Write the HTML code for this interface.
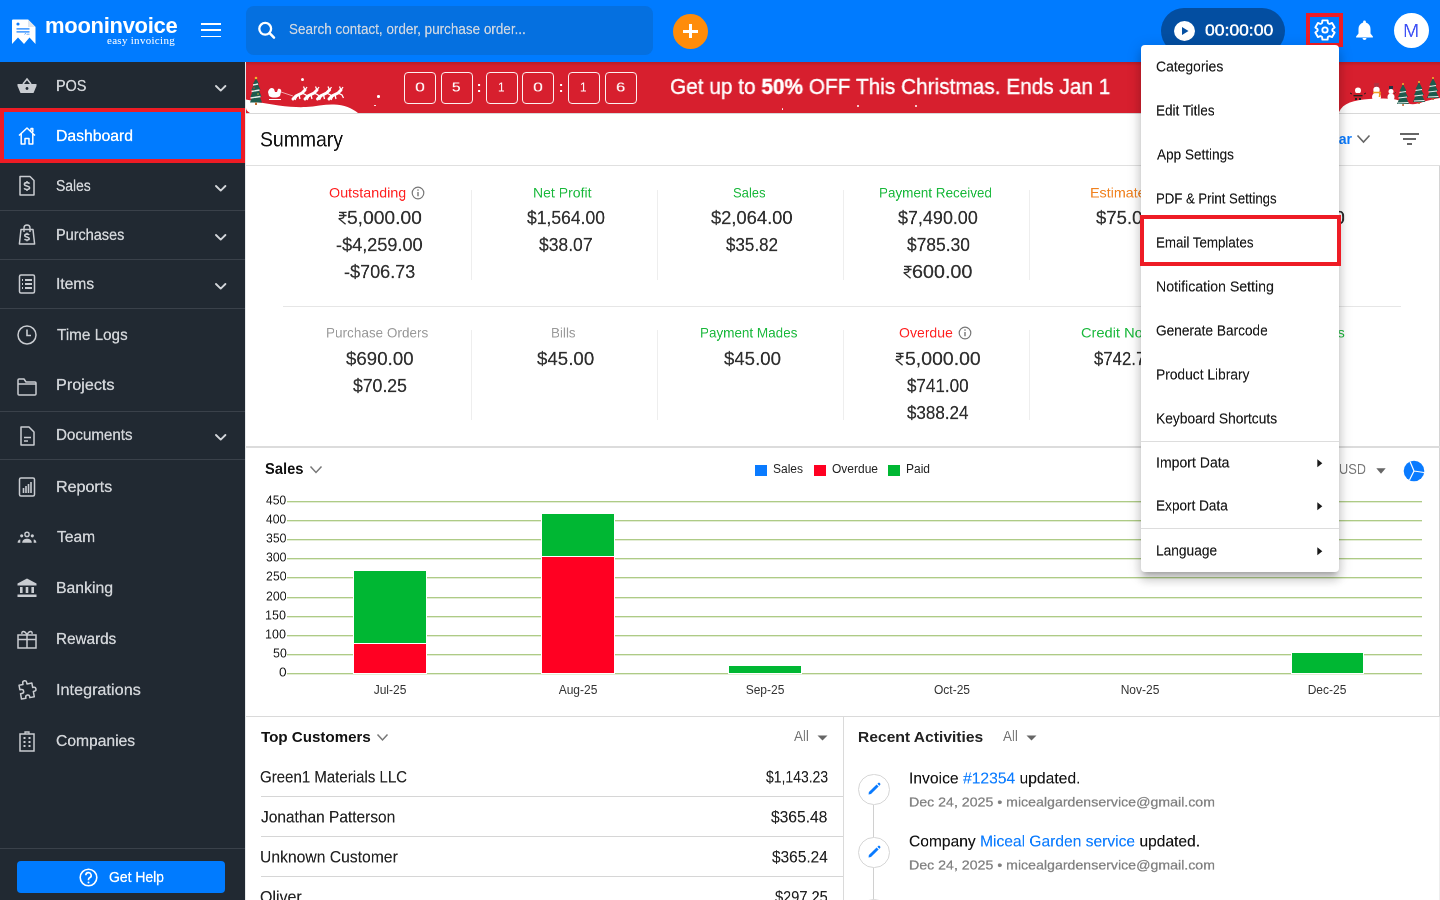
<!DOCTYPE html><html><head><meta charset="utf-8"><style>
*{margin:0;padding:0;box-sizing:border-box}
html,body{width:1440px;height:900px;overflow:hidden;background:#fff;font-family:"Liberation Sans",sans-serif}
.t{position:absolute;white-space:nowrap;line-height:1;will-change:transform}
.r{position:absolute}
</style></head><body>
<div class="r" style="left:0px;top:0px;width:1440px;height:62px;background:#007BFF"></div>
<svg class="r" style="left:11px;top:19px;" width="25" height="26" viewBox="0 0 25 26"><path d="M1 1.5 Q1 0.5 2 0.5 L17 0.5 L24.5 8 L24.5 25 L18.5 18.5 L13 25 L7 18.5 L1 25 Z" fill="#fff"/>
<path d="M17 0.5 L17 8 L24.5 8 Z" fill="#dfe6ee"/>
<circle cx="7" cy="5" r="1.6" fill="#0A7BFF"/>
<rect x="5.5" y="9.3" width="13" height="1.2" fill="#0A7BFF"/>
<rect x="5.5" y="12.3" width="13" height="1.2" fill="#0A7BFF"/>
<path d="M13.5 15.5 l1 -1.2 l0.8 1.2 M16 15.2 h2.5" stroke="#0A7BFF" stroke-width="0.6" fill="none"/></svg>
<div class="t" style="left:45px;top:14.80px;font-size:22px;color:#fff;font-weight:700;letter-spacing:-0.3px">mooninvoice</div>
<div class="t" style="left:-425.5px;width:600px;text-align:right;top:34.65px;font-size:11px;color:#fff;font-weight:400;font-family:'Liberation Serif',serif;letter-spacing:0.3px">easy invoicing</div>
<div class="r" style="left:201px;top:23px;width:20px;height:1.9px;background:#fff"></div>
<div class="r" style="left:201px;top:29.4px;width:20px;height:1.9px;background:#fff"></div>
<div class="r" style="left:201px;top:35.6px;width:20px;height:1.9px;background:#fff"></div>
<div class="r" style="left:246px;top:6px;width:407px;height:49px;background:#0570E0;border-radius:8px"></div>
<svg class="r" style="left:256px;top:19px;" width="22" height="22" viewBox="0 0 22 22"><circle cx="9.2" cy="9.8" r="5.9" stroke="#fff" stroke-width="2.3" fill="none"/><path d="M13.6 14.2 L18 18.6" stroke="#fff" stroke-width="2.5" stroke-linecap="round"/></svg>
<div class="t" style="left:289.33px;top:21.68px;font-size:28.99px;color:#CDD6E2;font-weight:400;transform:scale(0.4651,0.5);transform-origin:0 0;-webkit-text-stroke:0.4px currentColor;">Search contact, order, purchase order...</div>
<div class="r" style="left:673px;top:14px;width:35px;height:35px;background:#FF8C0A;border-radius:50%"></div>
<div class="r" style="left:683px;top:29.5px;width:15px;height:3px;background:#fff"></div>
<div class="r" style="left:689px;top:24px;width:3px;height:14px;background:#fff"></div>
<div class="r" style="left:1161px;top:8px;width:124px;height:46px;background:#034EA1;border-radius:23px"></div>
<div class="r" style="left:1174px;top:21px;width:21px;height:20px;background:#fff;border-radius:50%"></div>
<svg class="r" style="left:1174px;top:21px;" width="21" height="20" viewBox="0 0 21 20"><path d="M8 6 L14.5 10 L8 14 Z" fill="#034EA1"/></svg>
<div class="t" style="left:1205.30px;top:22.94px;font-size:30.73px;color:#fff;font-weight:400;transform:scale(0.5708,0.5);transform-origin:0 0;-webkit-text-stroke:0.9px currentColor;">00:00:00</div>
<div class="r" style="left:1306px;top:13px;width:37px;height:34px;border:4px solid #EE1C25"></div>
<svg class="r" style="left:1314px;top:19px;" width="22" height="22" viewBox="0 0 22 22"><path d="M7.35 4.68 L8.12 3.86 L8.41 1.34 L13.59 1.34 L13.88 3.86 L14.65 4.68 L15.74 4.93 L18.07 3.93 L20.66 8.41 L18.63 9.93 L18.30 11.00 L18.63 12.07 L20.66 13.59 L18.07 18.07 L15.74 17.07 L14.65 17.32 L13.88 18.14 L13.59 20.66 L8.41 20.66 L8.12 18.14 L7.35 17.32 L6.26 17.07 L3.93 18.07 L1.34 13.59 L3.37 12.07 L3.70 11.00 L3.37 9.93 L1.34 8.41 L3.93 3.93 L6.26 4.93Z" stroke="#fff" stroke-width="1.9" fill="none" stroke-linejoin="round"/><circle cx="11" cy="11" r="2.7" stroke="#fff" stroke-width="1.8" fill="none"/></svg>
<svg class="r" style="left:1355px;top:19px;" width="19" height="22" viewBox="0 0 19 22"><path d="M9.5 1.5 a1.4 1.4 0 0 1 1.4 1.4 v0.6 c3 0.8 4.6 3.4 4.6 6.5 v4.5 l2.4 3 v0.9 H1.1 v-0.9 l2.4 -3 v-4.5 c0 -3.1 1.6 -5.7 4.6 -6.5 v-0.6 a1.4 1.4 0 0 1 1.4 -1.4z" fill="#fff"/><path d="M7.5 19 h4 a2 2 0 0 1 -4 0z" fill="#fff"/></svg>
<div class="r" style="left:1394px;top:13px;width:35px;height:35px;background:#fff;border-radius:50%"></div>
<div class="t" style="left:1403.45px;top:21.60px;font-size:36.23px;color:#3F51F5;font-weight:400;transform:scale(0.5355,0.5);transform-origin:0 0;">M</div>
<div class="r" style="left:0px;top:62px;width:244.7px;height:838px;background:#212932"></div>
<div class="r" style="left:0px;top:108px;width:245px;height:1.2px;background:#3A414A"></div>
<div class="r" style="left:0px;top:209.5px;width:245px;height:1.2px;background:#3A414A"></div>
<div class="r" style="left:0px;top:258.5px;width:245px;height:1.2px;background:#3A414A"></div>
<div class="r" style="left:0px;top:307.5px;width:245px;height:1.2px;background:#3A414A"></div>
<div class="r" style="left:0px;top:410.5px;width:245px;height:1.2px;background:#3A414A"></div>
<div class="r" style="left:0px;top:459px;width:245px;height:1.2px;background:#3A414A"></div>
<div class="r" style="left:0px;top:108px;width:244.7px;height:55px;background:#EE1C25"></div>
<div class="r" style="left:4px;top:112px;width:237.2px;height:47px;background:#007BFF"></div>
<div class="t" style="left:55.85px;top:77.95px;font-size:31.88px;color:#D3D6DA;font-weight:400;transform:scale(0.4514,0.5);transform-origin:0 0;-webkit-text-stroke:0.6px currentColor;">POS</div>
<svg class="r" style="left:213px;top:83.8px;" width="15" height="9" viewBox="0 0 15 9"><path d="M3 2 L7.7 6.6 L12.4 2" stroke="#D3D6DA" stroke-width="1.9" fill="none" stroke-linecap="round" stroke-linejoin="round"/></svg>
<div class="t" style="left:55.74px;top:127.95px;font-size:31.88px;color:#fff;font-weight:400;transform:scale(0.4936,0.5);transform-origin:0 0;-webkit-text-stroke:0.6px currentColor;">Dashboard</div>
<div class="t" style="left:56.30px;top:177.95px;font-size:31.88px;color:#D3D6DA;font-weight:400;transform:scale(0.4360,0.5);transform-origin:0 0;-webkit-text-stroke:0.6px currentColor;">Sales</div>
<svg class="r" style="left:213px;top:183.8px;" width="15" height="9" viewBox="0 0 15 9"><path d="M3 2 L7.7 6.6 L12.4 2" stroke="#D3D6DA" stroke-width="1.9" fill="none" stroke-linecap="round" stroke-linejoin="round"/></svg>
<div class="t" style="left:55.84px;top:226.95px;font-size:31.88px;color:#D3D6DA;font-weight:400;transform:scale(0.4534,0.5);transform-origin:0 0;-webkit-text-stroke:0.6px currentColor;">Purchases</div>
<svg class="r" style="left:213px;top:232.8px;" width="15" height="9" viewBox="0 0 15 9"><path d="M3 2 L7.7 6.6 L12.4 2" stroke="#D3D6DA" stroke-width="1.9" fill="none" stroke-linecap="round" stroke-linejoin="round"/></svg>
<div class="t" style="left:55.60px;top:275.95px;font-size:31.88px;color:#D3D6DA;font-weight:400;transform:scale(0.4888,0.5);transform-origin:0 0;-webkit-text-stroke:0.6px currentColor;">Items</div>
<svg class="r" style="left:213px;top:281.8px;" width="15" height="9" viewBox="0 0 15 9"><path d="M3 2 L7.7 6.6 L12.4 2" stroke="#D3D6DA" stroke-width="1.9" fill="none" stroke-linecap="round" stroke-linejoin="round"/></svg>
<div class="t" style="left:56.69px;top:326.95px;font-size:31.88px;color:#D3D6DA;font-weight:400;transform:scale(0.4787,0.5);transform-origin:0 0;-webkit-text-stroke:0.6px currentColor;">Time Logs</div>
<div class="t" style="left:55.70px;top:377.45px;font-size:31.88px;color:#D3D6DA;font-weight:400;transform:scale(0.5077,0.5);transform-origin:0 0;-webkit-text-stroke:0.6px currentColor;">Projects</div>
<div class="t" style="left:55.79px;top:427.45px;font-size:31.88px;color:#D3D6DA;font-weight:400;transform:scale(0.4746,0.5);transform-origin:0 0;-webkit-text-stroke:0.6px currentColor;">Documents</div>
<svg class="r" style="left:213px;top:433.3px;" width="15" height="9" viewBox="0 0 15 9"><path d="M3 2 L7.7 6.6 L12.4 2" stroke="#D3D6DA" stroke-width="1.9" fill="none" stroke-linecap="round" stroke-linejoin="round"/></svg>
<div class="t" style="left:55.72px;top:478.95px;font-size:31.88px;color:#D3D6DA;font-weight:400;transform:scale(0.5034,0.5);transform-origin:0 0;-webkit-text-stroke:0.6px currentColor;">Reports</div>
<div class="t" style="left:56.69px;top:529.45px;font-size:31.88px;color:#D3D6DA;font-weight:400;transform:scale(0.4884,0.5);transform-origin:0 0;-webkit-text-stroke:0.6px currentColor;">Team</div>
<div class="t" style="left:55.74px;top:580.45px;font-size:31.88px;color:#D3D6DA;font-weight:400;transform:scale(0.4949,0.5);transform-origin:0 0;-webkit-text-stroke:0.6px currentColor;">Banking</div>
<div class="t" style="left:55.78px;top:631.45px;font-size:31.88px;color:#D3D6DA;font-weight:400;transform:scale(0.4791,0.5);transform-origin:0 0;-webkit-text-stroke:0.6px currentColor;">Rewards</div>
<div class="t" style="left:55.54px;top:682.45px;font-size:31.88px;color:#D3D6DA;font-weight:400;transform:scale(0.5089,0.5);transform-origin:0 0;-webkit-text-stroke:0.6px currentColor;">Integrations</div>
<div class="t" style="left:56.22px;top:733.20px;font-size:31.88px;color:#D3D6DA;font-weight:400;transform:scale(0.4906,0.5);transform-origin:0 0;-webkit-text-stroke:0.6px currentColor;">Companies</div>
<svg class="r" style="left:16px;top:76px;" width="22" height="22" viewBox="0 0 22 22"><path d="M7 8 L11 3 L15 8" stroke="#C9CCD1" stroke-width="1.6" fill="none"/><path d="M1.5 8 H20.5 V10 L17.5 17 H4.5 L1.5 10 Z" fill="#C9CCD1"/><circle cx="11" cy="12.5" r="1.4" fill="#212932"/></svg>
<svg class="r" style="left:16px;top:125px;" width="22" height="22" viewBox="0 0 22 22"><path d="M3 10.5 L11 3 L19 10.5 M5.2 8.5 V19 H9 V13.5 H13 V19 H16.8 V8.5 M15 5.5 V3.5 H16.8 V7.2" stroke="#fff" stroke-width="1.5" fill="none" stroke-linejoin="round"/></svg>
<svg class="r" style="left:16px;top:175px;" width="22" height="22" viewBox="0 0 22 22"><path d="M4 1.5 H14 L18 5.5 V20 H4 Z" stroke="#C9CCD1" stroke-width="1.5" fill="none" stroke-linejoin="round"/><path d="M13.40 8.70 C13.00 7.10 8.20 7.10 8.40 9.60 C8.60 11.20 13.60 10.80 13.60 12.80 C13.60 15.00 8.60 15.00 8.30 13.20 M11.00 6.00 V7.60 M11.00 14.60 V16.00" stroke="#C9CCD1" stroke-width="1.6" fill="none"/></svg>
<svg class="r" style="left:16px;top:224px;" width="22" height="22" viewBox="0 0 22 22"><path d="M5 5.5 H17 L18.6 20 H3.4 Z" stroke="#C9CCD1" stroke-width="1.5" fill="none" stroke-linejoin="round"/><path d="M8 8 V4 a3 3 0 0 1 6 0 V8" stroke="#C9CCD1" stroke-width="1.4" fill="none"/><path d="M13.04 11.04 C12.70 9.69 8.62 9.69 8.79 11.81 C8.96 13.17 13.21 12.83 13.21 14.53 C13.21 16.40 8.96 16.40 8.71 14.87 M11.00 8.75 V10.11 M11.00 16.06 V17.25" stroke="#C9CCD1" stroke-width="1.6" fill="none"/></svg>
<svg class="r" style="left:16px;top:273px;" width="22" height="22" viewBox="0 0 22 22"><rect x="3.5" y="2" width="15" height="18" rx="1.5" stroke="#C9CCD1" stroke-width="1.5" fill="none"/><path d="M9 7 H16 M9 11 H16 M9 15 H16" stroke="#C9CCD1" stroke-width="1.8"/><path d="M6 7 H7 M6 11 H7 M6 15 H7" stroke="#C9CCD1" stroke-width="1.8"/></svg>
<svg class="r" style="left:16px;top:324px;" width="22" height="22" viewBox="0 0 22 22"><circle cx="11" cy="11" r="9" stroke="#C9CCD1" stroke-width="1.5" fill="none"/><path d="M11 5.5 V11.5 H15" stroke="#C9CCD1" stroke-width="1.6" fill="none"/></svg>
<svg class="r" style="left:16px;top:375px;" width="22" height="22" viewBox="0 0 22 22"><path d="M2 5 V19 a1 1 0 0 0 1 1 H19 a1 1 0 0 0 1 -1 V8 a1 1 0 0 0 -1 -1 H10 L8 4 H3 a1 1 0 0 0 -1 1 Z M2 9 H20" stroke="#C9CCD1" stroke-width="1.5" fill="none" stroke-linejoin="round"/></svg>
<svg class="r" style="left:16px;top:425px;" width="22" height="22" viewBox="0 0 22 22"><path d="M5 2 H13 L18 7 V20 H5 Z" stroke="#C9CCD1" stroke-width="1.5" fill="none" stroke-linejoin="round"/><path d="M8 12.5 H15 M8 16 H12" stroke="#C9CCD1" stroke-width="1.6"/></svg>
<svg class="r" style="left:16px;top:476px;" width="22" height="22" viewBox="0 0 22 22"><rect x="3.5" y="2" width="15" height="18" rx="1.5" stroke="#C9CCD1" stroke-width="1.5" fill="none"/><path d="M7.5 17 V12 M10 17 V10 M12.5 17 V8 M15 17 V6" stroke="#C9CCD1" stroke-width="1.6"/></svg>
<svg class="r" style="left:16px;top:527px;" width="22" height="22" viewBox="0 0 22 22"><circle cx="11" cy="7.4" r="2.1" stroke="#C9CCD1" stroke-width="1.4" fill="none"/><circle cx="5.7" cy="8.8" r="1.6" fill="#C9CCD1"/><circle cx="16.3" cy="8.8" r="1.6" fill="#C9CCD1"/><path d="M6.2 15.8 C6.2 12.8 8.5 11.7 11 11.7 C13.5 11.7 15.8 12.8 15.8 15.8 Z" fill="#C9CCD1"/><path d="M1.6 15.8 C1.6 14 2.6 12.9 4.3 12.6 L4.3 15.8 Z M20.4 15.8 C20.4 14 19.4 12.9 17.7 12.6 L17.7 15.8 Z" fill="#C9CCD1"/></svg>
<svg class="r" style="left:16px;top:577px;" width="22" height="22" viewBox="0 0 22 22"><path d="M11 1.5 L20.5 6.5 V8.5 H1.5 V6.5 Z" fill="#C9CCD1"/><rect x="4" y="10" width="2.6" height="6" fill="#C9CCD1"/><rect x="9.7" y="10" width="2.6" height="6" fill="#C9CCD1"/><rect x="15.4" y="10" width="2.6" height="6" fill="#C9CCD1"/><rect x="1.5" y="17.5" width="19" height="2.5" fill="#C9CCD1"/></svg>
<svg class="r" style="left:16px;top:628px;" width="22" height="22" viewBox="0 0 22 22"><rect x="2" y="7" width="18" height="13" stroke="#C9CCD1" stroke-width="1.5" fill="none"/><path d="M2 11.5 H20 M11 7 V20" stroke="#C9CCD1" stroke-width="1.5"/><path d="M11 7 C9 2 5 3 6 6 M11 7 C13 2 17 3 16 6" stroke="#C9CCD1" stroke-width="1.4" fill="none"/></svg>
<svg class="r" style="left:16px;top:679px;" width="22" height="22" viewBox="0 0 22 22"><path d="M8 3.5 a2 2 0 0 1 4 0 V5 H17 V9.5 h1 a2 2 0 0 1 0 4 h-1 V19 H12.5 V18 a2 2 0 0 0 -4 0 V19 H4 V13.5 h1.5 a2 2 0 0 0 0 -4 H4 V5 H8 Z" stroke="#C9CCD1" stroke-width="1.5" fill="none" stroke-linejoin="round" transform="rotate(-10 11 11)"/></svg>
<svg class="r" style="left:16px;top:730px;" width="22" height="22" viewBox="0 0 22 22"><rect x="4" y="4" width="14" height="17" stroke="#C9CCD1" stroke-width="1.5" fill="none"/><path d="M9 4 V2 H13 V4" stroke="#C9CCD1" stroke-width="1.3" fill="none"/><path d="M7.5 8 h2 M12.5 8 h2 M7.5 12 h2 M12.5 12 h2 M7.5 16 h2 M12.5 16 h2" stroke="#C9CCD1" stroke-width="2.2"/></svg>
<div class="r" style="left:0px;top:847.5px;width:245px;height:1.2px;background:#3A414A"></div>
<div class="r" style="left:17px;top:861px;width:208px;height:32px;background:#007BFF;border-radius:4px"></div>
<svg class="r" style="left:79px;top:868px;" width="19" height="19" viewBox="0 0 19 19"><circle cx="9.5" cy="9.5" r="8.3" stroke="#fff" stroke-width="1.6" fill="none"/><path d="M6.8 7.3 a2.7 2.7 0 1 1 3.8 2.5 c-0.8 0.4 -1.1 0.9 -1.1 1.7 V12.3" stroke="#fff" stroke-width="1.6" fill="none"/><circle cx="9.5" cy="14.6" r="1" fill="#fff"/></svg>
<div class="t" style="left:109.30px;top:870.18px;font-size:28.99px;color:#fff;font-weight:400;transform:scale(0.4804,0.5);transform-origin:0 0;-webkit-text-stroke:0.6px currentColor;">Get Help</div>
<div class="r" style="left:244.7px;top:62px;width:1px;height:838px;background:#E6E8EA"></div>
<div class="r" style="left:245.5px;top:62px;width:1194.5px;height:51px;background:linear-gradient(#B91C27 0px,#D71F2E 4px,#D71F2E 100%)"></div>
<svg class="r" style="left:246px;top:62px;" width="115" height="51" viewBox="0 0 115 51"><path d="M0 37.5 C20 42 45 46 60 45 C70 44.5 80 42 88 42.5 C98 43 106 46 112 51 H4 C2 50 0 48 0 46 Z" fill="#fff"/></svg>
<svg class="r" style="left:248px;top:76px;" width="16" height="30" viewBox="0 0 16 30"><path d="M8 2 L11 8 L10 8 L12.5 14 L11 14 L13.5 21 L12 21 L14 26.5 H2 L4 21 H2.5 L5 14 H3.5 L6 8 H5 Z" fill="#1E5B4E"/><path d="M5 9 l5 -1 M3.5 15.5 l8 -1.5 M2.5 22 l10 -1.5" stroke="#E6EEEC" stroke-width="1.3"/><circle cx="6" cy="12" r="0.7" fill="#E33"/><circle cx="10" cy="18" r="0.7" fill="#FC3"/><rect x="7" y="26.5" width="2" height="2.5" fill="#C46B2B"/><circle cx="8" cy="2" r="1.3" fill="#F7B52B"/></svg>
<svg class="r" style="left:245px;top:86px;" width="120" height="16" viewBox="0 0 120 16"><path d="M23 6 C24 2 27 1 29 3 L30 6 L32 6 L33 3 C35 2 37 4 36 6 L35 10 C32 12 27 12 24 10 Z" fill="#fff"/><path d="M24 13.5 H36" stroke="#fff" stroke-width="1"/><path d="M36 6 L48 10" stroke="#fff" stroke-width="0.6"/><g transform="translate(47,0)"><path d="M1 13 L4 10 L10 7 L13 4" stroke="#fff" stroke-width="3" fill="none" stroke-linecap="round"/><path d="M13 4 L11.5 0.5 M13 4 L15 1 M10 7 L14 9 L15.5 12 M5 10 L3 14 M7 9 L8 13" stroke="#fff" stroke-width="1.3" fill="none"/></g><g transform="translate(59,0)"><path d="M1 13 L4 10 L10 7 L13 4" stroke="#fff" stroke-width="3" fill="none" stroke-linecap="round"/><path d="M13 4 L11.5 0.5 M13 4 L15 1 M10 7 L14 9 L15.5 12 M5 10 L3 14 M7 9 L8 13" stroke="#fff" stroke-width="1.3" fill="none"/></g><g transform="translate(71.5,0)"><path d="M1 13 L4 10 L10 7 L13 4" stroke="#fff" stroke-width="3" fill="none" stroke-linecap="round"/><path d="M13 4 L11.5 0.5 M13 4 L15 1 M10 7 L14 9 L15.5 12 M5 10 L3 14 M7 9 L8 13" stroke="#fff" stroke-width="1.3" fill="none"/></g><g transform="translate(83,0)"><path d="M1 13 L4 10 L10 7 L13 4" stroke="#fff" stroke-width="3" fill="none" stroke-linecap="round"/><path d="M13 4 L11.5 0.5 M13 4 L15 1 M10 7 L14 9 L15.5 12 M5 10 L3 14 M7 9 L8 13" stroke="#fff" stroke-width="1.3" fill="none"/></g></svg>
<div class="r" style="left:301px;top:78px;width:3px;height:3px;background:#fff;border-radius:50%"></div>
<div class="r" style="left:377px;top:95px;width:2.5px;height:2.5px;background:#fff;border-radius:50%"></div>
<div class="r" style="left:374px;top:104.5px;width:1.5px;height:1.5px;background:#fff;border-radius:50%"></div>
<div class="r" style="left:781.5px;top:108px;width:1.5px;height:1.5px;background:#fff;border-radius:50%"></div>
<div class="r" style="left:856.5px;top:104.5px;width:2px;height:2px;background:#fff;border-radius:50%"></div>
<div class="r" style="left:915px;top:104.5px;width:2px;height:2px;background:#fff;border-radius:50%"></div>
<div class="r" style="left:404px;top:72px;width:32px;height:32px;border:1.6px solid #FDEFF0;border-radius:4px"></div>
<div class="t" style="left:414.98px;top:80.92px;font-size:25.14px;color:#fff;font-weight:400;transform:scale(0.7127,0.5);transform-origin:0 0;-webkit-text-stroke:0.2px currentColor;">0</div>
<div class="r" style="left:440.5px;top:72px;width:32px;height:32px;border:1.6px solid #FDEFF0;border-radius:4px"></div>
<div class="t" style="left:452.18px;top:80.92px;font-size:25.14px;color:#fff;font-weight:400;transform:scale(0.6132,0.5);transform-origin:0 0;-webkit-text-stroke:0.2px currentColor;">5</div>
<div class="r" style="left:485.5px;top:72px;width:32px;height:32px;border:1.6px solid #FDEFF0;border-radius:4px"></div>
<div class="t" style="left:497.93px;top:80.92px;font-size:25.14px;color:#fff;font-weight:400;transform:scale(0.4810,0.5);transform-origin:0 0;-webkit-text-stroke:0.2px currentColor;">1</div>
<div class="r" style="left:522px;top:72px;width:32px;height:32px;border:1.6px solid #FDEFF0;border-radius:4px"></div>
<div class="t" style="left:532.98px;top:80.92px;font-size:25.14px;color:#fff;font-weight:400;transform:scale(0.7127,0.5);transform-origin:0 0;-webkit-text-stroke:0.2px currentColor;">0</div>
<div class="r" style="left:568px;top:72px;width:32px;height:32px;border:1.6px solid #FDEFF0;border-radius:4px"></div>
<div class="t" style="left:580.43px;top:80.92px;font-size:25.14px;color:#fff;font-weight:400;transform:scale(0.4810,0.5);transform-origin:0 0;-webkit-text-stroke:0.2px currentColor;">1</div>
<div class="r" style="left:605px;top:72px;width:32px;height:32px;border:1.6px solid #FDEFF0;border-radius:4px"></div>
<div class="t" style="left:616.37px;top:80.92px;font-size:25.14px;color:#fff;font-weight:400;transform:scale(0.6572,0.5);transform-origin:0 0;-webkit-text-stroke:0.2px currentColor;">6</div>
<div class="t" style="left:179px;width:600px;text-align:center;top:80.10px;font-size:14px;color:#fff;font-weight:700;">:</div>
<div class="t" style="left:261px;width:600px;text-align:center;top:80.10px;font-size:14px;color:#fff;font-weight:700;">:</div>
<div class="t" style="left:670px;top:76.38px;font-size:22.5px;color:#fff;font-weight:400;transform:scaleX(0.925);transform-origin:0 0;-webkit-text-stroke:0.35px #fff">Get up to <b>50%</b> OFF This Christmas. Ends Jan 1</div>
<svg class="r" style="left:1339px;top:62px;" width="101" height="51" viewBox="0 0 101 51"><path d="M0 50 C4 41 15 38 30 37 C45 36 55 36 62 39 C70 43 76 43 84 40 C90 38 95 37 101 36 V51 H0 Z" fill="#fff"/><g transform="translate(13,22)"><path d="M3 5 L6 0 L9 5 Z" fill="#D7202F"/><circle cx="6" cy="6.5" r="3" fill="#fff"/><path d="M1.5 9 H10.5 V14 H1.5 Z" fill="#C81E2A"/><rect x="1.5" y="11" width="9" height="1.3" fill="#222"/><path d="M0 10 L-2 9 M12 10 L14 9" stroke="#222" stroke-width="1"/><rect x="3" y="14" width="2" height="2" fill="#222"/><rect x="7" y="14" width="2" height="2" fill="#222"/></g><g transform="translate(32,21)"><rect x="3" y="0" width="5" height="4" fill="#B03040"/><circle cx="5.5" cy="7" r="3.2" fill="#fff"/><circle cx="5.5" cy="14" r="4.5" fill="#fff"/><path d="M2 9.5 H9 L8.5 14" stroke="#F0A020" stroke-width="1.6" fill="none"/></g><g transform="translate(48,24)"><rect x="2" y="0" width="4" height="3" fill="#234"/><circle cx="4" cy="5.5" r="2.5" fill="#fff"/><circle cx="4" cy="11" r="3.5" fill="#fff"/><path d="M7 8 L9 6" stroke="#5a3a2a" stroke-width="0.8"/></g><g transform="translate(59,22)"><path d="M5 0 L8.5 7 H7 L10 13 H8 L11 20 H-1 L2 13 H0 L3 7 H1.5 Z" fill="#1D5C4D"/><path d="M1.5 8.5 L8 7.5 M0.5 14 L9 13 M0 19 L10.5 18.5" stroke="#E8F0EE" stroke-width="1.1"/><rect x="4.3" y="20" width="1.5" height="2" fill="#B8612A"/><circle cx="5" cy="0" r="1" fill="#F5B82E"/></g><g transform="translate(75,20)"><path d="M5 0 L8.5 7 H7 L10 13 H8 L11 20 H-1 L2 13 H0 L3 7 H1.5 Z" fill="#1D5C4D"/><path d="M1.5 8.5 L8 7.5 M0.5 14 L9 13 M0 19 L10.5 18.5" stroke="#E8F0EE" stroke-width="1.1"/><rect x="4.3" y="20" width="1.5" height="2" fill="#B8612A"/><circle cx="5" cy="0" r="1" fill="#F5B82E"/></g><g transform="translate(89,16)"><path d="M5 0 L8.5 7 H7 L10 13 H8 L11 20 H-1 L2 13 H0 L3 7 H1.5 Z" fill="#1D5C4D"/><path d="M1.5 8.5 L8 7.5 M0.5 14 L9 13 M0 19 L10.5 18.5" stroke="#E8F0EE" stroke-width="1.1"/><rect x="4.3" y="20" width="1.5" height="2" fill="#B8612A"/><circle cx="5" cy="0" r="1" fill="#F5B82E"/></g></svg>
<div class="r" style="left:245.5px;top:113px;width:1194px;height:1.2px;background:#D8D8D8"></div>
<div class="t" style="left:259.63px;top:128.84px;font-size:42.03px;color:#111;font-weight:400;transform:scale(0.4612,0.5);transform-origin:0 0;">Summary</div>
<div class="r" style="left:245.5px;top:165px;width:1194px;height:1.2px;background:#E0E0E0"></div>
<div class="t" style="left:751.5px;width:600px;text-align:right;top:131.90px;font-size:14px;color:#0A7BFF;font-weight:700;">ar</div>
<svg class="r" style="left:1356px;top:134px;" width="15" height="10" viewBox="0 0 15 10"><path d="M1.5 1.5 L7.5 8 L13.5 1.5" stroke="#666" stroke-width="1.6" fill="none"/></svg>
<div class="r" style="left:1400px;top:133px;width:18.5px;height:1.8px;background:#666"></div>
<div class="r" style="left:1403px;top:138.2px;width:12.5px;height:1.8px;background:#666"></div>
<div class="r" style="left:1407px;top:143px;width:4.5px;height:1.8px;background:#666"></div>
<div class="r" style="left:1438.5px;top:166px;width:1.5px;height:550px;background:#D4D4D4"></div>
<div class="r" style="left:1438.5px;top:716px;width:1.5px;height:184px;background:#EEEEEE"></div>
<div class="t" style="left:328.68px;top:185.57px;font-size:27.83px;color:#FF1E1E;font-weight:400;transform:scale(0.5152,0.5);transform-origin:0 0;">Outstanding</div>
<svg class="r" style="left:337.5px;top:211.2px;" width="10" height="14" viewBox="0 0 10 14"><path d="M1 1.35 H8.6 M1 4.5 H8.6 M1.9 1.35 C7.3 1.35 7.3 7.7 1.9 7.7 H1 L7.6 13.2" stroke="#2e2e2e" stroke-width="1.35" fill="none" stroke-linejoin="round"/></svg>
<div class="t" style="left:346.73px;top:208.98px;font-size:36.52px;color:#2e2e2e;font-weight:400;transform:scale(0.5268,0.5);transform-origin:0 0;-webkit-text-stroke:0.4px currentColor;">5,000.00</div>
<div class="t" style="left:336.13px;top:235.98px;font-size:36.52px;color:#2e2e2e;font-weight:400;transform:scale(0.4959,0.5);transform-origin:0 0;-webkit-text-stroke:0.4px currentColor;">-$4,259.00</div>
<div class="t" style="left:343.93px;top:262.98px;font-size:36.52px;color:#2e2e2e;font-weight:400;transform:scale(0.4944,0.5);transform-origin:0 0;-webkit-text-stroke:0.4px currentColor;">-$706.73</div>
<div class="t" style="left:533.33px;top:185.57px;font-size:27.83px;color:#19B83B;font-weight:400;transform:scale(0.5047,0.5);transform-origin:0 0;">Net Profit</div>
<div class="t" style="left:526.87px;top:208.98px;font-size:36.52px;color:#2e2e2e;font-weight:400;transform:scale(0.4798,0.5);transform-origin:0 0;-webkit-text-stroke:0.4px currentColor;">$1,564.00</div>
<div class="t" style="left:539.18px;top:235.98px;font-size:36.52px;color:#2e2e2e;font-weight:400;transform:scale(0.4792,0.5);transform-origin:0 0;-webkit-text-stroke:0.4px currentColor;">$38.07</div>
<div class="t" style="left:732.90px;top:185.57px;font-size:27.83px;color:#19B83B;font-weight:400;transform:scale(0.4667,0.5);transform-origin:0 0;">Sales</div>
<div class="t" style="left:711.22px;top:208.98px;font-size:36.52px;color:#2e2e2e;font-weight:400;transform:scale(0.5016,0.5);transform-origin:0 0;-webkit-text-stroke:0.4px currentColor;">$2,064.00</div>
<div class="t" style="left:726.03px;top:235.98px;font-size:36.52px;color:#2e2e2e;font-weight:400;transform:scale(0.4655,0.5);transform-origin:0 0;-webkit-text-stroke:0.4px currentColor;">$35.82</div>
<div class="t" style="left:878.72px;top:185.57px;font-size:27.83px;color:#19B83B;font-weight:400;transform:scale(0.4835,0.5);transform-origin:0 0;">Payment Received</div>
<div class="t" style="left:898.17px;top:208.98px;font-size:36.52px;color:#2e2e2e;font-weight:400;transform:scale(0.4910,0.5);transform-origin:0 0;-webkit-text-stroke:0.4px currentColor;">$7,490.00</div>
<div class="t" style="left:906.58px;top:235.98px;font-size:36.52px;color:#2e2e2e;font-weight:400;transform:scale(0.4763,0.5);transform-origin:0 0;-webkit-text-stroke:0.4px currentColor;">$785.30</div>
<svg class="r" style="left:903.25px;top:265.2px;" width="10" height="14" viewBox="0 0 10 14"><path d="M1 1.35 H8.6 M1 4.5 H8.6 M1.9 1.35 C7.3 1.35 7.3 7.7 1.9 7.7 H1 L7.6 13.2" stroke="#2e2e2e" stroke-width="1.35" fill="none" stroke-linejoin="round"/></svg>
<div class="t" style="left:912.26px;top:262.98px;font-size:36.52px;color:#2e2e2e;font-weight:400;transform:scale(0.5402,0.5);transform-origin:0 0;-webkit-text-stroke:0.4px currentColor;">600.00</div>
<div class="t" style="left:1089.76px;top:185.57px;font-size:27.83px;color:#F0811E;font-weight:400;transform:scale(0.5134,0.5);transform-origin:0 0;">Estimates</div>
<div class="t" style="left:1095.81px;top:208.98px;font-size:36.52px;color:#2e2e2e;font-weight:400;transform:scale(0.5076,0.5);transform-origin:0 0;-webkit-text-stroke:0.4px currentColor;">$75.00</div>
<div class="t" style="left:1280.18px;top:185.57px;font-size:27.83px;color:#19B83B;font-weight:400;transform:scale(0.5279,0.5);transform-origin:0 0;">Invoices</div>
<div class="t" style="left:1275.81px;top:208.98px;font-size:36.52px;color:#2e2e2e;font-weight:400;transform:scale(0.5215,0.5);transform-origin:0 0;-webkit-text-stroke:0.4px currentColor;">$700.00</div>
<div class="r" style="left:470.5px;top:189.7px;width:1px;height:90px;background:#EEEEEE"></div>
<div class="r" style="left:656.5px;top:189.7px;width:1px;height:90px;background:#EEEEEE"></div>
<div class="r" style="left:842.5px;top:189.7px;width:1px;height:90px;background:#EEEEEE"></div>
<div class="r" style="left:1028.5px;top:189.7px;width:1px;height:90px;background:#EEEEEE"></div>
<div class="r" style="left:1214.5px;top:189.7px;width:1px;height:90px;background:#EEEEEE"></div>
<div class="t" style="left:325.62px;top:325.57px;font-size:27.83px;color:#999;font-weight:400;transform:scale(0.4859,0.5);transform-origin:0 0;">Purchase Orders</div>
<div class="t" style="left:345.96px;top:349.68px;font-size:36.52px;color:#2e2e2e;font-weight:400;transform:scale(0.5116,0.5);transform-origin:0 0;-webkit-text-stroke:0.4px currentColor;">$690.00</div>
<div class="t" style="left:352.82px;top:376.68px;font-size:36.52px;color:#2e2e2e;font-weight:400;transform:scale(0.4821,0.5);transform-origin:0 0;-webkit-text-stroke:0.4px currentColor;">$70.25</div>
<div class="t" style="left:550.58px;top:325.57px;font-size:27.83px;color:#999;font-weight:400;transform:scale(0.4813,0.5);transform-origin:0 0;">Bills</div>
<div class="t" style="left:537.29px;top:349.68px;font-size:36.52px;color:#2e2e2e;font-weight:400;transform:scale(0.5117,0.5);transform-origin:0 0;-webkit-text-stroke:0.4px currentColor;">$45.00</div>
<div class="t" style="left:700.22px;top:325.57px;font-size:27.83px;color:#19B83B;font-weight:400;transform:scale(0.4842,0.5);transform-origin:0 0;">Payment Mades</div>
<div class="t" style="left:723.51px;top:349.68px;font-size:36.52px;color:#2e2e2e;font-weight:400;transform:scale(0.5094,0.5);transform-origin:0 0;-webkit-text-stroke:0.4px currentColor;">$45.00</div>
<div class="t" style="left:898.60px;top:325.57px;font-size:27.83px;color:#FF1E1E;font-weight:400;transform:scale(0.5045,0.5);transform-origin:0 0;">Overdue</div>
<svg class="r" style="left:895.4px;top:351.9px;" width="10" height="14" viewBox="0 0 10 14"><path d="M1 1.35 H8.6 M1 4.5 H8.6 M1.9 1.35 C7.3 1.35 7.3 7.7 1.9 7.7 H1 L7.6 13.2" stroke="#2e2e2e" stroke-width="1.35" fill="none" stroke-linejoin="round"/></svg>
<div class="t" style="left:904.62px;top:349.68px;font-size:36.52px;color:#2e2e2e;font-weight:400;transform:scale(0.5326,0.5);transform-origin:0 0;-webkit-text-stroke:0.4px currentColor;">5,000.00</div>
<div class="t" style="left:907.23px;top:376.68px;font-size:36.52px;color:#2e2e2e;font-weight:400;transform:scale(0.4663,0.5);transform-origin:0 0;-webkit-text-stroke:0.4px currentColor;">$741.00</div>
<div class="t" style="left:907.23px;top:403.68px;font-size:36.52px;color:#2e2e2e;font-weight:400;transform:scale(0.4650,0.5);transform-origin:0 0;-webkit-text-stroke:0.4px currentColor;">$388.24</div>
<div class="t" style="left:1080.67px;top:325.57px;font-size:27.83px;color:#19B83B;font-weight:400;transform:scale(0.5256,0.5);transform-origin:0 0;">Credit Notes</div>
<div class="t" style="left:1093.83px;top:349.68px;font-size:36.52px;color:#2e2e2e;font-weight:400;transform:scale(0.4587,0.5);transform-origin:0 0;-webkit-text-stroke:0.4px currentColor;">$742.75</div>
<div class="t" style="left:1269.85px;top:325.57px;font-size:27.83px;color:#19B83B;font-weight:400;transform:scale(0.5144,0.5);transform-origin:0 0;">Debit Notes</div>
<div class="t" style="left:1289.84px;top:349.68px;font-size:36.52px;color:#2e2e2e;font-weight:400;transform:scale(0.4452,0.5);transform-origin:0 0;-webkit-text-stroke:0.4px currentColor;">$0.00</div>
<div class="r" style="left:470.5px;top:329.7px;width:1px;height:90px;background:#EEEEEE"></div>
<div class="r" style="left:656.5px;top:329.7px;width:1px;height:90px;background:#EEEEEE"></div>
<div class="r" style="left:842.5px;top:329.7px;width:1px;height:90px;background:#EEEEEE"></div>
<div class="r" style="left:1028.5px;top:329.7px;width:1px;height:90px;background:#EEEEEE"></div>
<div class="r" style="left:1214.5px;top:329.7px;width:1px;height:90px;background:#EEEEEE"></div>
<svg class="r" style="left:410.5px;top:186px;" width="14" height="14" viewBox="0 0 14 14"><circle cx="7" cy="7" r="5.8" stroke="#777" stroke-width="1.2" fill="none"/><path d="M7 6 V10.3" stroke="#777" stroke-width="1.4"/><circle cx="7" cy="4.1" r="0.8" fill="#777"/></svg>
<svg class="r" style="left:957.5px;top:326px;" width="14" height="14" viewBox="0 0 14 14"><circle cx="7" cy="7" r="5.8" stroke="#777" stroke-width="1.2" fill="none"/><path d="M7 6 V10.3" stroke="#777" stroke-width="1.4"/><circle cx="7" cy="4.1" r="0.8" fill="#777"/></svg>
<div class="r" style="left:283px;top:305.5px;width:1118px;height:1.2px;background:#E6E6E6"></div>
<div class="r" style="left:245.5px;top:446.2px;width:1194px;height:1.5px;background:#DCDCDC"></div>
<div class="t" style="left:265.36px;top:460.57px;font-size:30.43px;color:#111;font-weight:700;transform:scale(0.4832,0.5);transform-origin:0 0;">Sales</div>
<svg class="r" style="left:309px;top:465px;" width="14" height="10" viewBox="0 0 14 10"><path d="M1.5 1.5 L7 7.5 L12.5 1.5" stroke="#777" stroke-width="1.5" fill="none"/></svg>
<div class="r" style="left:755px;top:465px;width:12px;height:11px;background:#0A7BFF"></div>
<div class="t" style="left:772.7px;top:463.30px;font-size:12px;color:#222;font-weight:400;">Sales</div>
<div class="r" style="left:814px;top:465px;width:12px;height:11px;background:#FF0022"></div>
<div class="t" style="left:831.7px;top:463.30px;font-size:12px;color:#222;font-weight:400;">Overdue</div>
<div class="r" style="left:888px;top:465px;width:12px;height:11px;background:#00B733"></div>
<div class="t" style="left:905.7px;top:463.30px;font-size:12px;color:#222;font-weight:400;">Paid</div>
<div class="t" style="left:1339.47px;top:462.30px;font-size:28.70px;color:#777;font-weight:400;transform:scale(0.4466,0.5);transform-origin:0 0;">USD</div>
<svg class="r" style="left:1375.5px;top:467.8px;" width="10" height="6" viewBox="0 0 10 6"><path d="M0.3 0.3 H9.7 L5 5.7 Z" fill="#666"/></svg>
<svg class="r" style="left:1403px;top:460px;" width="22" height="22" viewBox="0 0 22 22"><circle cx="11" cy="11" r="10.3" fill="#0A7BFF"/><path d="M11 11 L7 1.5 M11 11 L21 12.5 M11 11 L6.5 20" stroke="#fff" stroke-width="1.2"/></svg>
<div class="r" style="left:287px;top:673px;width:1135px;height:1px;background:#AECB86;box-shadow:0 1px 0 rgba(174,203,134,0.35)"></div>
<div class="t" style="left:278.96px;top:665.68px;font-size:25.70px;color:#1a1a1a;font-weight:400;transform:scale(0.5269,0.5);transform-origin:0 0;">0</div>
<div class="r" style="left:287px;top:654px;width:1135px;height:1px;background:#AECB86;box-shadow:0 1px 0 rgba(174,203,134,0.35)"></div>
<div class="t" style="left:272.50px;top:646.68px;font-size:25.70px;color:#1a1a1a;font-weight:400;transform:scale(0.4864,0.5);transform-origin:0 0;">50</div>
<div class="r" style="left:287px;top:635px;width:1135px;height:1px;background:#AECB86;box-shadow:0 1px 0 rgba(174,203,134,0.35)"></div>
<div class="t" style="left:265.49px;top:627.68px;font-size:25.70px;color:#1a1a1a;font-weight:400;transform:scale(0.4896,0.5);transform-origin:0 0;">100</div>
<div class="r" style="left:287px;top:616px;width:1135px;height:1px;background:#AECB86;box-shadow:0 1px 0 rgba(174,203,134,0.35)"></div>
<div class="t" style="left:265.49px;top:608.68px;font-size:25.70px;color:#1a1a1a;font-weight:400;transform:scale(0.4896,0.5);transform-origin:0 0;">150</div>
<div class="r" style="left:287px;top:597px;width:1135px;height:1px;background:#AECB86;box-shadow:0 1px 0 rgba(174,203,134,0.35)"></div>
<div class="t" style="left:265.88px;top:589.68px;font-size:25.70px;color:#1a1a1a;font-weight:400;transform:scale(0.4803,0.5);transform-origin:0 0;">200</div>
<div class="r" style="left:287px;top:577px;width:1135px;height:1px;background:#AECB86;box-shadow:0 1px 0 rgba(174,203,134,0.35)"></div>
<div class="t" style="left:265.88px;top:569.68px;font-size:25.70px;color:#1a1a1a;font-weight:400;transform:scale(0.4803,0.5);transform-origin:0 0;">250</div>
<div class="r" style="left:287px;top:558px;width:1135px;height:1px;background:#AECB86;box-shadow:0 1px 0 rgba(174,203,134,0.35)"></div>
<div class="t" style="left:266.01px;top:550.68px;font-size:25.70px;color:#1a1a1a;font-weight:400;transform:scale(0.4772,0.5);transform-origin:0 0;">300</div>
<div class="r" style="left:287px;top:539px;width:1135px;height:1px;background:#AECB86;box-shadow:0 1px 0 rgba(174,203,134,0.35)"></div>
<div class="t" style="left:266.01px;top:531.68px;font-size:25.70px;color:#1a1a1a;font-weight:400;transform:scale(0.4772,0.5);transform-origin:0 0;">350</div>
<div class="r" style="left:287px;top:520px;width:1135px;height:1px;background:#AECB86;box-shadow:0 1px 0 rgba(174,203,134,0.35)"></div>
<div class="t" style="left:266.26px;top:512.68px;font-size:25.70px;color:#1a1a1a;font-weight:400;transform:scale(0.4713,0.5);transform-origin:0 0;">400</div>
<div class="r" style="left:287px;top:501px;width:1135px;height:1px;background:#AECB86;box-shadow:0 1px 0 rgba(174,203,134,0.35)"></div>
<div class="t" style="left:266.26px;top:493.68px;font-size:25.70px;color:#1a1a1a;font-weight:400;transform:scale(0.4713,0.5);transform-origin:0 0;">450</div>
<div class="r" style="left:353px;top:570px;width:73.5px;height:73.5px;background:#00B733;border:1px solid #fff"></div>
<div class="r" style="left:353px;top:643px;width:73.5px;height:30.5px;background:#FF0022;border:1px solid #fff"></div>
<div class="r" style="left:541px;top:512.5px;width:73.5px;height:44.0px;background:#00B733;border:1px solid #fff"></div>
<div class="r" style="left:541px;top:556px;width:73.5px;height:117.5px;background:#FF0022;border:1px solid #fff"></div>
<div class="r" style="left:728px;top:664.5px;width:73.5px;height:9.0px;background:#00B733;border:1px solid #fff"></div>
<div class="r" style="left:1290.5px;top:651.5px;width:73.5px;height:22.0px;background:#00B733;border:1px solid #fff"></div>
<div class="t" style="left:90px;width:600px;text-align:center;top:683.80px;font-size:12px;color:#333;font-weight:400;">Jul-25</div>
<div class="t" style="left:277.5px;width:600px;text-align:center;top:683.80px;font-size:12px;color:#333;font-weight:400;">Aug-25</div>
<div class="t" style="left:465px;width:600px;text-align:center;top:683.80px;font-size:12px;color:#333;font-weight:400;">Sep-25</div>
<div class="t" style="left:652px;width:600px;text-align:center;top:683.80px;font-size:12px;color:#333;font-weight:400;">Oct-25</div>
<div class="t" style="left:839.5px;width:600px;text-align:center;top:683.80px;font-size:12px;color:#333;font-weight:400;">Nov-25</div>
<div class="t" style="left:1027px;width:600px;text-align:center;top:683.80px;font-size:12px;color:#333;font-weight:400;">Dec-25</div>
<div class="r" style="left:245.5px;top:716px;width:1194px;height:1.2px;background:#DADADA"></div>
<div class="r" style="left:842.5px;top:716px;width:1.2px;height:184px;background:#DADADA"></div>
<div class="t" style="left:260.85px;top:729.98px;font-size:28.99px;color:#111;font-weight:700;transform:scale(0.5216,0.5);transform-origin:0 0;">Top Customers</div>
<svg class="r" style="left:376px;top:733px;" width="13" height="9" viewBox="0 0 13 9"><path d="M1.5 1.5 L6.5 7 L11.5 1.5" stroke="#777" stroke-width="1.5" fill="none"/></svg>
<div class="t" style="left:794.00px;top:729.18px;font-size:28.99px;color:#777;font-weight:400;transform:scale(0.4600,0.5);transform-origin:0 0;">All</div>
<svg class="r" style="left:817px;top:735px;" width="11" height="6" viewBox="0 0 11 6"><path d="M0.5 0.5 H10.5 L5.5 5.5 Z" fill="#666"/></svg>
<div class="t" style="left:260.25px;top:768.80px;font-size:32.46px;color:#222;font-weight:400;transform:scale(0.4632,0.5);transform-origin:0 0;-webkit-text-stroke:0.24px currentColor;">Green1 Materials LLC</div>
<div class="t" style="left:765.56px;top:768.80px;font-size:32.46px;color:#222;font-weight:400;transform:scale(0.4301,0.5);transform-origin:0 0;-webkit-text-stroke:0.24px currentColor;">$1,143.23</div>
<div class="r" style="left:261px;top:796px;width:582px;height:1px;background:#D6D6D6"></div>
<div class="t" style="left:260.69px;top:808.80px;font-size:32.46px;color:#222;font-weight:400;transform:scale(0.4769,0.5);transform-origin:0 0;-webkit-text-stroke:0.24px currentColor;">Jonathan Patterson</div>
<div class="t" style="left:771.34px;top:808.80px;font-size:32.46px;color:#222;font-weight:400;transform:scale(0.4802,0.5);transform-origin:0 0;-webkit-text-stroke:0.24px currentColor;">$365.48</div>
<div class="r" style="left:261px;top:836px;width:582px;height:1px;background:#D6D6D6"></div>
<div class="t" style="left:259.74px;top:848.80px;font-size:32.46px;color:#222;font-weight:400;transform:scale(0.4835,0.5);transform-origin:0 0;-webkit-text-stroke:0.24px currentColor;">Unknown Customer</div>
<div class="t" style="left:771.65px;top:848.80px;font-size:32.46px;color:#222;font-weight:400;transform:scale(0.4750,0.5);transform-origin:0 0;-webkit-text-stroke:0.24px currentColor;">$365.24</div>
<div class="r" style="left:261px;top:876px;width:582px;height:1px;background:#D6D6D6"></div>
<div class="t" style="left:260.20px;top:888.80px;font-size:32.46px;color:#222;font-weight:400;transform:scale(0.4916,0.5);transform-origin:0 0;-webkit-text-stroke:0.24px currentColor;">Oliver</div>
<div class="t" style="left:774.75px;top:888.80px;font-size:32.46px;color:#222;font-weight:400;transform:scale(0.4495,0.5);transform-origin:0 0;-webkit-text-stroke:0.24px currentColor;">$297.25</div>
<div class="t" style="left:857.51px;top:729.88px;font-size:28.99px;color:#222;font-weight:700;transform:scale(0.5382,0.5);transform-origin:0 0;">Recent Activities</div>
<div class="t" style="left:1003.00px;top:729.18px;font-size:28.99px;color:#777;font-weight:400;transform:scale(0.4600,0.5);transform-origin:0 0;">All</div>
<svg class="r" style="left:1026px;top:735px;" width="11" height="6" viewBox="0 0 11 6"><path d="M0.5 0.5 H10.5 L5.5 5.5 Z" fill="#666"/></svg>
<div class="r" style="left:873px;top:805px;width:1.2px;height:95px;background:#D0D0D0"></div>
<div class="r" style="left:858.3px;top:773.5px;width:31.5px;height:31.5px;background:#fff;border:1px solid #D6D6D6;border-radius:50%"></div>
<svg class="r" style="left:867px;top:781.0px;" width="15" height="15" viewBox="0 0 15 15"><path d="M1.6 13.4 L1.9 11 L9.6 3.6 L11.6 5.6 L4 13.1 Z" fill="#0A7BFF"/><path d="M10.4 2.8 L11.3 1.9 Q12 1.3 12.7 2 L13.2 2.5 Q13.8 3.2 13.1 3.9 L12.3 4.8 Z" fill="#0A7BFF"/></svg>
<div class="t" style="left:908.59px;top:770.54px;font-size:30.72px;color:#111;font-weight:400;transform:scale(0.5095,0.5);transform-origin:0 0;-webkit-text-stroke:0.24px currentColor;">Invoice <span style="color:#0A7BFF">#12354</span> updated.</div>
<div class="t" style="left:908.87px;top:795.81px;font-size:24.93px;color:#808080;font-weight:400;transform:scale(0.5685,0.5);transform-origin:0 0;-webkit-text-stroke:0.5px currentColor;">Dec 24, 2025 • micealgardenservice@gmail.com</div>
<div class="r" style="left:858.3px;top:836.5px;width:31.5px;height:31.5px;background:#fff;border:1px solid #D6D6D6;border-radius:50%"></div>
<svg class="r" style="left:867px;top:844.0px;" width="15" height="15" viewBox="0 0 15 15"><path d="M1.6 13.4 L1.9 11 L9.6 3.6 L11.6 5.6 L4 13.1 Z" fill="#0A7BFF"/><path d="M10.4 2.8 L11.3 1.9 Q12 1.3 12.7 2 L13.2 2.5 Q13.8 3.2 13.1 3.9 L12.3 4.8 Z" fill="#0A7BFF"/></svg>
<div class="t" style="left:909.22px;top:833.54px;font-size:30.72px;color:#111;font-weight:400;transform:scale(0.5073,0.5);transform-origin:0 0;-webkit-text-stroke:0.24px currentColor;">Company <span style="color:#0A7BFF">Miceal Garden service</span> updated.</div>
<div class="t" style="left:908.87px;top:858.81px;font-size:24.93px;color:#808080;font-weight:400;transform:scale(0.5685,0.5);transform-origin:0 0;-webkit-text-stroke:0.5px currentColor;">Dec 24, 2025 • micealgardenservice@gmail.com</div>
<div class="r" style="left:858.3px;top:899px;width:31.5px;height:31.5px;background:#fff;border:1px solid #D6D6D6;border-radius:50%"></div>
<div class="r" style="left:1141px;top:45px;width:198px;height:527px;background:#fff;border-radius:4px;box-shadow:0 5px 5px -3px rgba(0,0,0,.2),0 8px 10px 1px rgba(0,0,0,.14),0 3px 14px 2px rgba(0,0,0,.12)"></div>
<div class="t" style="left:1156.30px;top:58.56px;font-size:29.28px;color:#1a1a1a;font-weight:400;transform:scale(0.4753,0.5);transform-origin:0 0;-webkit-text-stroke:0.3px currentColor;">Categories</div>
<div class="t" style="left:1155.92px;top:102.56px;font-size:29.28px;color:#1a1a1a;font-weight:400;transform:scale(0.4617,0.5);transform-origin:0 0;-webkit-text-stroke:0.3px currentColor;">Edit Titles</div>
<div class="t" style="left:1157.00px;top:146.56px;font-size:29.28px;color:#1a1a1a;font-weight:400;transform:scale(0.4635,0.5);transform-origin:0 0;-webkit-text-stroke:0.3px currentColor;">App Settings</div>
<div class="t" style="left:1155.95px;top:190.56px;font-size:29.28px;color:#1a1a1a;font-weight:400;transform:scale(0.4492,0.5);transform-origin:0 0;-webkit-text-stroke:0.3px currentColor;">PDF &amp; Print Settings</div>
<div class="t" style="left:1155.93px;top:234.56px;font-size:29.28px;color:#1a1a1a;font-weight:400;transform:scale(0.4554,0.5);transform-origin:0 0;-webkit-text-stroke:0.3px currentColor;">Email Templates</div>
<div class="t" style="left:1155.87px;top:278.56px;font-size:29.28px;color:#1a1a1a;font-weight:400;transform:scale(0.4830,0.5);transform-origin:0 0;-webkit-text-stroke:0.3px currentColor;">Notification Setting</div>
<div class="t" style="left:1156.32px;top:322.56px;font-size:29.28px;color:#1a1a1a;font-weight:400;transform:scale(0.4671,0.5);transform-origin:0 0;-webkit-text-stroke:0.3px currentColor;">Generate Barcode</div>
<div class="t" style="left:1155.90px;top:366.56px;font-size:29.28px;color:#1a1a1a;font-weight:400;transform:scale(0.4711,0.5);transform-origin:0 0;-webkit-text-stroke:0.3px currentColor;">Product Library</div>
<div class="t" style="left:1155.90px;top:410.56px;font-size:29.28px;color:#1a1a1a;font-weight:400;transform:scale(0.4710,0.5);transform-origin:0 0;-webkit-text-stroke:0.3px currentColor;">Keyboard Shortcuts</div>
<div class="t" style="left:1155.73px;top:454.86px;font-size:29.28px;color:#1a1a1a;font-weight:400;transform:scale(0.4805,0.5);transform-origin:0 0;-webkit-text-stroke:0.3px currentColor;">Import Data</div>
<div class="t" style="left:1155.91px;top:497.86px;font-size:29.28px;color:#1a1a1a;font-weight:400;transform:scale(0.4644,0.5);transform-origin:0 0;-webkit-text-stroke:0.3px currentColor;">Export Data</div>
<div class="t" style="left:1155.90px;top:542.86px;font-size:29.28px;color:#1a1a1a;font-weight:400;transform:scale(0.4689,0.5);transform-origin:0 0;-webkit-text-stroke:0.3px currentColor;">Language</div>
<svg class="r" style="left:1316.5px;top:459.2px;" width="6" height="9" viewBox="0 0 6 9"><path d="M0.3 0.3 L5.3 4.3 L0.3 8.3 Z" fill="#1a1a1a"/></svg>
<svg class="r" style="left:1316.5px;top:502.2px;" width="6" height="9" viewBox="0 0 6 9"><path d="M0.3 0.3 L5.3 4.3 L0.3 8.3 Z" fill="#1a1a1a"/></svg>
<svg class="r" style="left:1316.5px;top:546.7px;" width="6" height="9" viewBox="0 0 6 9"><path d="M0.3 0.3 L5.3 4.3 L0.3 8.3 Z" fill="#1a1a1a"/></svg>
<div class="r" style="left:1141px;top:440.5px;width:198px;height:1.2px;background:#DDDDDD"></div>
<div class="r" style="left:1141px;top:527.5px;width:198px;height:1.2px;background:#DDDDDD"></div>
<div class="r" style="left:1140px;top:215px;width:201px;height:51px;border:4px solid #EE1C25"></div>
</body></html>
